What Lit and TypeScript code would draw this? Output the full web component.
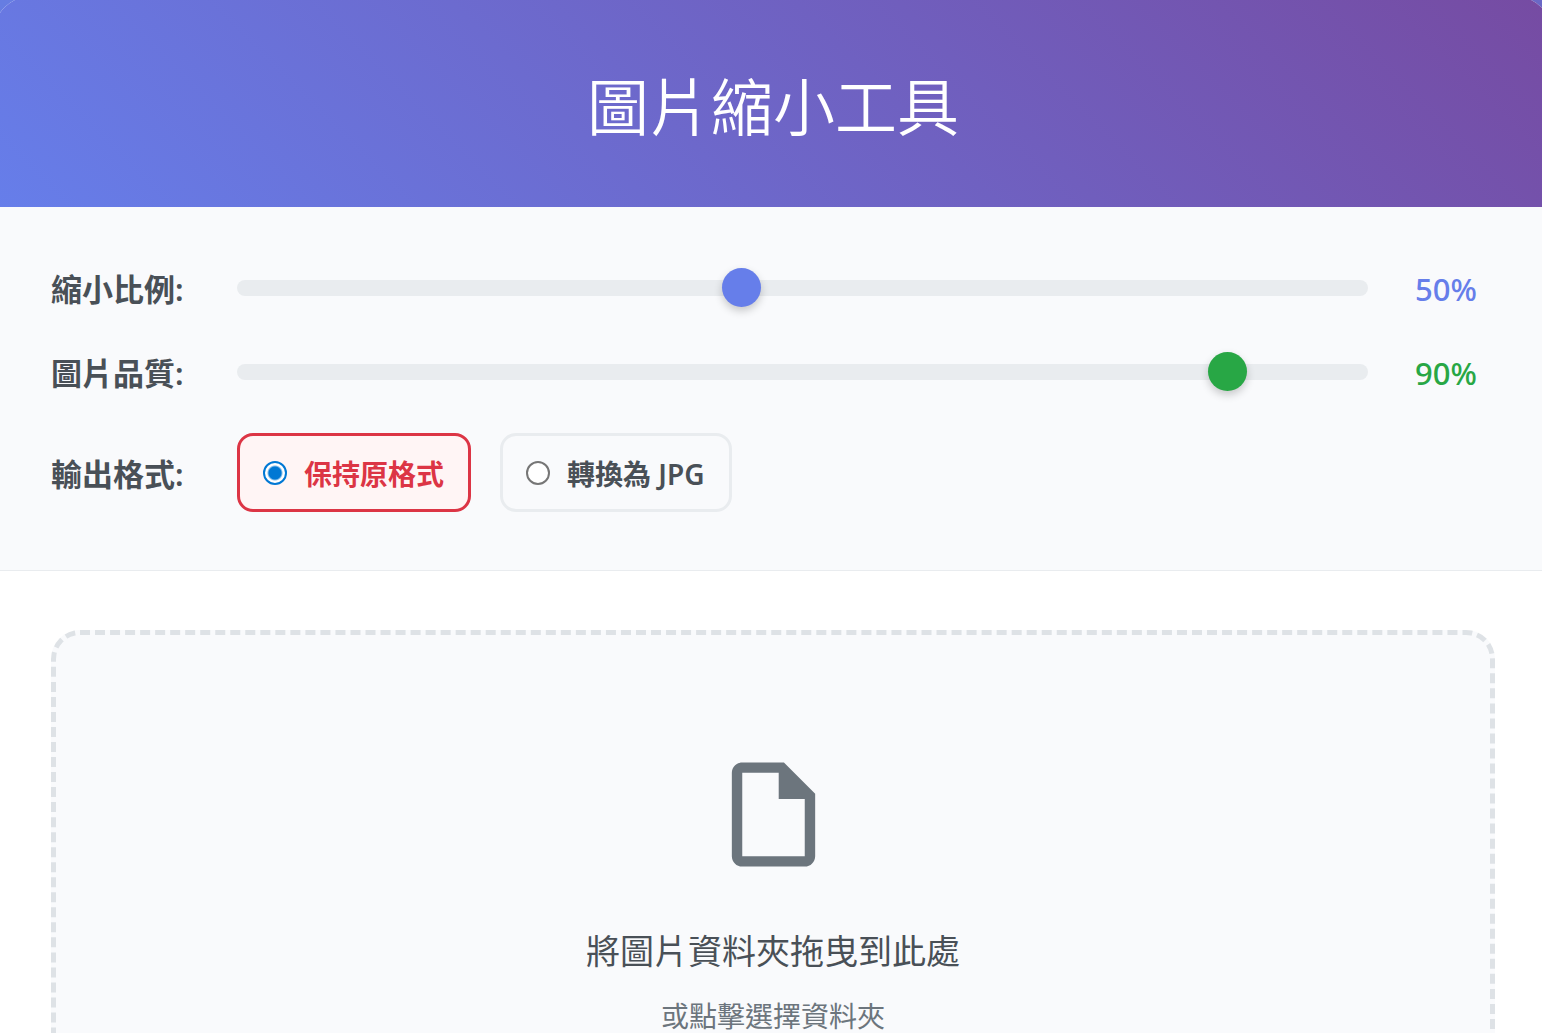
import { LitElement, html, css } from "lit";
import { customElement, state } from "lit/decorators.js";

@customElement("app-root")
export class AppRoot extends LitElement {
  @state() private scale = 50;
  @state() private quality = 90;
  @state() private format = "original";

  static styles = css`
    :host {
      display: block;
      overflow: hidden;
      background: linear-gradient(90deg, #667de2, #6a68c6);
      color: #495057;
      font-family: "Noto Sans", "Noto Sans CJK TC", sans-serif;
      font-size: 31px;
    }
    .card {
      margin: -4px -11px 0 -7px;
      background: #fff;
      border-radius: 39px 39px 0 0;
      overflow: hidden;
    }
    .header {
      padding: 62px 58px 56px;
      background: linear-gradient(45deg, #667eea, #764ba2);
      color: #fff;
      text-align: center;
    }
    .title {
      margin: 0;
      font-family: "Noto Sans CJK TC", sans-serif;
      font-size: 62px;
      font-weight: 350;
      line-height: 93px;
    }
    .settings {
      display: flex;
      flex-direction: column;
      gap: 39px;
      padding: 58px;
      background: #f9fafc;
      border-bottom: 1px solid #e9ecef;
    }
    .row {
      display: flex;
      align-items: center;
      gap: 29px;
    }
    .label,
    .value {
      padding-top: 4px;
      line-height: 41px;
    }
    .label {
      min-width: 157px;
      font-weight: 600;
    }
    .slider {
      flex: 1;
      min-width: 0;
      height: 16px;
      margin: 0;
      border-radius: 8px;
      background: #e9ecef;
      appearance: none;
      -webkit-appearance: none;
      cursor: pointer;
    }
    .slider::-webkit-slider-thumb {
      -webkit-appearance: none;
      width: 39px;
      height: 39px;
      border-radius: 50%;
      background: #667eea;
      box-shadow: 0 4px 8px rgba(0, 0, 0, 0.2);
    }
    .slider.green::-webkit-slider-thumb {
      background: #28a745;
    }
    .value {
      min-width: 98px;
      color: #667eea;
      font-weight: 500;
      text-align: center;
    }
    .value.green {
      color: #28a745;
    }
    .options {
      display: flex;
      flex-wrap: wrap;
      gap: 29px;
    }
    .option {
      display: flex;
      align-items: center;
      gap: 17px;
      padding: 16px 24px 16px 23px;
      border: 3px solid #e9ecef;
      border-radius: 16px;
      font-size: 28px;
      font-weight: 600;
      cursor: pointer;
    }
    .option.selected {
      border-color: #dc3545;
      background: #fff5f5;
      color: #dc3545;
    }
    .option-text {
      padding-top: 4px;
      line-height: 37px;
    }
    .radio {
      box-sizing: border-box;
      width: 24px;
      height: 24px;
      margin: 0;
      border: 2px solid #767676;
      border-radius: 50%;
      background: #fff;
      appearance: none;
      -webkit-appearance: none;
    }
    .radio:checked {
      border-color: #0078d4;
      background: radial-gradient(circle, #0078d4 6px, #fff 8px);
    }
    .content {
      padding: 59px 58px;
    }
    .dropzone {
      display: flex;
      flex-direction: column;
      align-items: center;
      box-sizing: border-box;
      width: 100%;
      padding: 117px 39px;
      border: 5px dashed #dee2e6;
      border-radius: 29px;
      background: #f9fafc;
      color: #495057;
      font: inherit;
      cursor: pointer;
    }
    .icon {
      width: 125px;
      height: 125px;
      margin-bottom: 42px;
      fill: #6c757d;
    }
    .prompt {
      font-size: 34px;
      line-height: 64px;
    }
    .hint {
      color: #6c757d;
      font-size: 28px;
      line-height: 66px;
    }
  `;

  private option(value: string, text: string) {
    const selected = this.format === value;
    return html`
      <label class="option ${selected ? "selected" : ""}">
        <input
          class="radio"
          type="radio"
          name="format"
          value=${value}
          .checked=${selected}
          @change=${() => (this.format = value)}
        />
        <span class="option-text">${text}</span>
      </label>
    `;
  }

  render() {
    return html`
      <main class="card">
        <header class="header"><h1 class="title">圖片縮小工具</h1></header>
        <section class="settings">
          <div class="row">
            <label class="label" for="scale">縮小比例:</label>
            <input
              class="slider"
              id="scale"
              type="range"
              min="10"
              max="100"
              .value=${String(this.scale)}
              @input=${(e: Event) => (this.scale = Number((e.target as HTMLInputElement).value))}
            />
            <output class="value" for="scale">${this.scale}%</output>
          </div>
          <div class="row">
            <label class="label" for="quality">圖片品質:</label>
            <input
              class="slider green"
              id="quality"
              type="range"
              min="10"
              max="100"
              .value=${String(this.quality)}
              @input=${(e: Event) => (this.quality = Number((e.target as HTMLInputElement).value))}
            />
            <output class="value green" for="quality">${this.quality}%</output>
          </div>
          <div class="row" role="radiogroup" aria-labelledby="format-label">
            <span class="label" id="format-label">輸出格式:</span>
            <div class="options">
              ${this.option("original", "保持原格式")} ${this.option("jpg", "轉換為 JPG")}
            </div>
          </div>
        </section>
        <section class="content">
          <button class="dropzone" type="button">
            <svg class="icon" viewBox="0 0 24 24" aria-hidden="true">
              <path
                d="M14 2H6C4.9 2 4 2.9 4 4V20C4 21.1 4.9 22 6 22H18C19.1 22 20 21.1 20 20V8L14 2ZM18 20H6V4H13V9H18V20Z"
              />
            </svg>
            <span class="prompt">將圖片資料夾拖曳到此處</span>
            <span class="hint">或點擊選擇資料夾</span>
          </button>
        </section>
      </main>
    `;
  }
}
